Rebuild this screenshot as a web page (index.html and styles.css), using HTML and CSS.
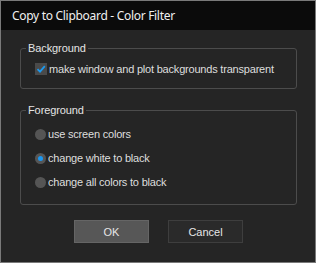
FILE: index.html
```html
<!DOCTYPE html>
<html lang="en">
<head>
    <meta charset="UTF-8">
    <title>Copy to Clipboard - Color Filter</title>
    <link rel="stylesheet" href="styles.css">
</head>
<body>
    <div class="window">
        <!-- Title bar -->
        <div class="titlebar">Copy to Clipboard - Color Filter</div>

        <div class="content">
            <!-- Background group -->
            <fieldset class="group group-bg">
                <legend>Background</legend>
                <label class="row">
                    <span class="check">
                        <svg width="12" height="12" viewBox="0 0 12 12"><path d="M2.5 6.2 L5 8.6 L9.8 3.2" fill="none" stroke="#1b9af0" stroke-width="1.8"/></svg>
                    </span>
                    make window and plot backgrounds transparent
                </label>
            </fieldset>

            <!-- Foreground group -->
            <fieldset class="group group-fg">
                <legend>Foreground</legend>
                <label class="row"><span class="radio"></span>use screen colors</label>
                <label class="row"><span class="radio checked"></span>change white to black</label>
                <label class="row"><span class="radio"></span>change all colors to black</label>
            </fieldset>

            <div class="buttons">
                <button class="btn btn-ok">OK</button>
                <button class="btn">Cancel</button>
            </div>
        </div>
    </div>
</body>
</html>
```

FILE: styles.css
```css
/* Dialog window */
body {
    margin: 0;
    background: #252525;
    font-family: "Liberation Sans", Arial, sans-serif;
    font-size: 11px;
    color: #dedede;
}

.window {
    width: 316px;
    height: 263px;
    box-sizing: border-box;
    border: 1px solid #7a7a7a;
    background: #252525;
}

.titlebar {
    height: 29px;
    background: #0b0b0b;
    color: #f0f0f0;
    font-family: "Noto Sans", "Open Sans", sans-serif;
    font-size: 12px;
    letter-spacing: -0.3px;
    line-height: 29px;
    padding-left: 11px;
}

.content {
    padding: 0 18px 0 19px;
}

/* Group boxes */
.group {
    margin: 0;
    box-sizing: border-box;
    border: 1px solid #4c4c4c;
    border-radius: 3px;
    padding: 0 0 0 5px;
}

.group legend {
    padding: 0 2px;
    margin-left: 0;
    line-height: 13px;
    color: #e4e4e4;
    letter-spacing: -0.1px;
}

.group-bg {
    margin-top: 12px;
    height: 47px;
    padding-top: 6px;
}

.group-fg {
    margin-top: 15px;
    height: 101px;
    padding-top: 5px;
}

.row {
    display: flex;
    align-items: center;
    height: 24px;
    padding-left: 9px;
    gap: 2px;
    letter-spacing: -0.2px;
}

.group-bg .row {
    height: 16px;
}

.check {
    width: 12px;
    height: 12px;
    background: #4a4a4a;
    display: inline-flex;
}

.radio {
    width: 11px;
    height: 11px;
    border-radius: 50%;
    background: #555;
    display: inline-flex;
    align-items: center;
    justify-content: center;
}

.radio.checked::after {
    content: "";
    width: 5px;
    height: 5px;
    border-radius: 50%;
    background: #1a98f2;
}

/* Buttons */
.buttons {
    display: flex;
    justify-content: center;
    gap: 19px;
    margin-top: 15px;
}

.btn {
    width: 75px;
    height: 23px;
    background: #2a2a2a;
    border: 1px solid #3e3e3e;
    color: #e6e6e6;
    font-family: "Liberation Sans", Arial, sans-serif;
    font-size: 11px;
    padding: 0;
}

.btn-ok {
    background: #575757;
    border-color: #656565;
}
```
